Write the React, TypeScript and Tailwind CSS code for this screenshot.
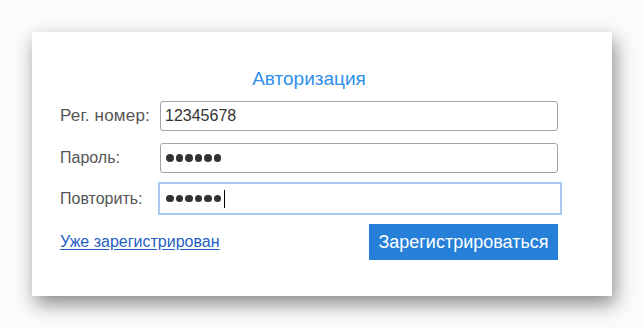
import React from 'react';

const font = { fontFamily: '"Liberation Sans", Arial, sans-serif' };

function Dots({ cursor = false }: { cursor?: boolean }) {
  return (
    <div className="flex items-center gap-[2px]">
      {Array.from({ length: 6 }).map((_, i) => (
        <span key={i} className="h-[7.5px] w-[7.5px] rounded-full bg-[#333]" />
      ))}
      {cursor && <span className="ml-[1px] h-[18px] w-px bg-black" />}
    </div>
  );
}

function Row({ label, children, className = '', labelClass = '' }: {
  label: string; children: React.ReactNode; className?: string; labelClass?: string;
}) {
  return (
    <div className={`flex items-center ${className}`}>
      <div className={`w-[100px] shrink-0 text-[16px] text-[#555] ${labelClass}`}>{label}</div>
      {children}
    </div>
  );
}

export default function App() {
  return (
    <div className="h-[328px] w-[643px] bg-[#fbfbfb] pl-[32px] pt-[32px]" style={font}>
      <div className="flex h-[264px] w-[580px] flex-col bg-white pl-[28px] pr-[54px] pt-[35px] shadow-[3px_8px_18px_rgba(0,0,0,0.45)]">
        <h1 className="h-[24px] text-center text-[19px] leading-[24px] text-[#3090ec]">Авторизация</h1>

        <Row label="Рег. номер:" className="mt-[10px]" labelClass="text-[17px] tracking-[0.2px]">
          <div className="flex h-[30px] flex-1 items-center rounded-[3px] border border-[#a3a3a3] px-[4px] text-[16px] text-[#333]">
            12345678
          </div>
        </Row>

        <Row label="Пароль:" className="mt-[12px]">
          <div className="flex h-[30px] flex-1 items-center rounded-[3px] border border-[#a3a3a3] px-[5px]">
            <Dots />
          </div>
        </Row>

        <Row label="Повторить:" className="mt-[9px]">
          <div className="-ml-[2px] -mr-[4px] flex h-[33px] flex-1 items-center border-2 border-[#a8caf0] px-[6px]">
            <Dots cursor />
          </div>
        </Row>

        <div className="mt-[9px] flex h-[36px] items-center justify-between">
          <a href="#" className="text-[16px] text-[#1f5fc4] underline underline-offset-2">
            Уже зарегистрирован
          </a>
          <button className="h-[36px] w-[189px] bg-[#2680d8] text-[18px] text-white">
            Зарегистрироваться
          </button>
        </div>
      </div>
    </div>
  );
}
